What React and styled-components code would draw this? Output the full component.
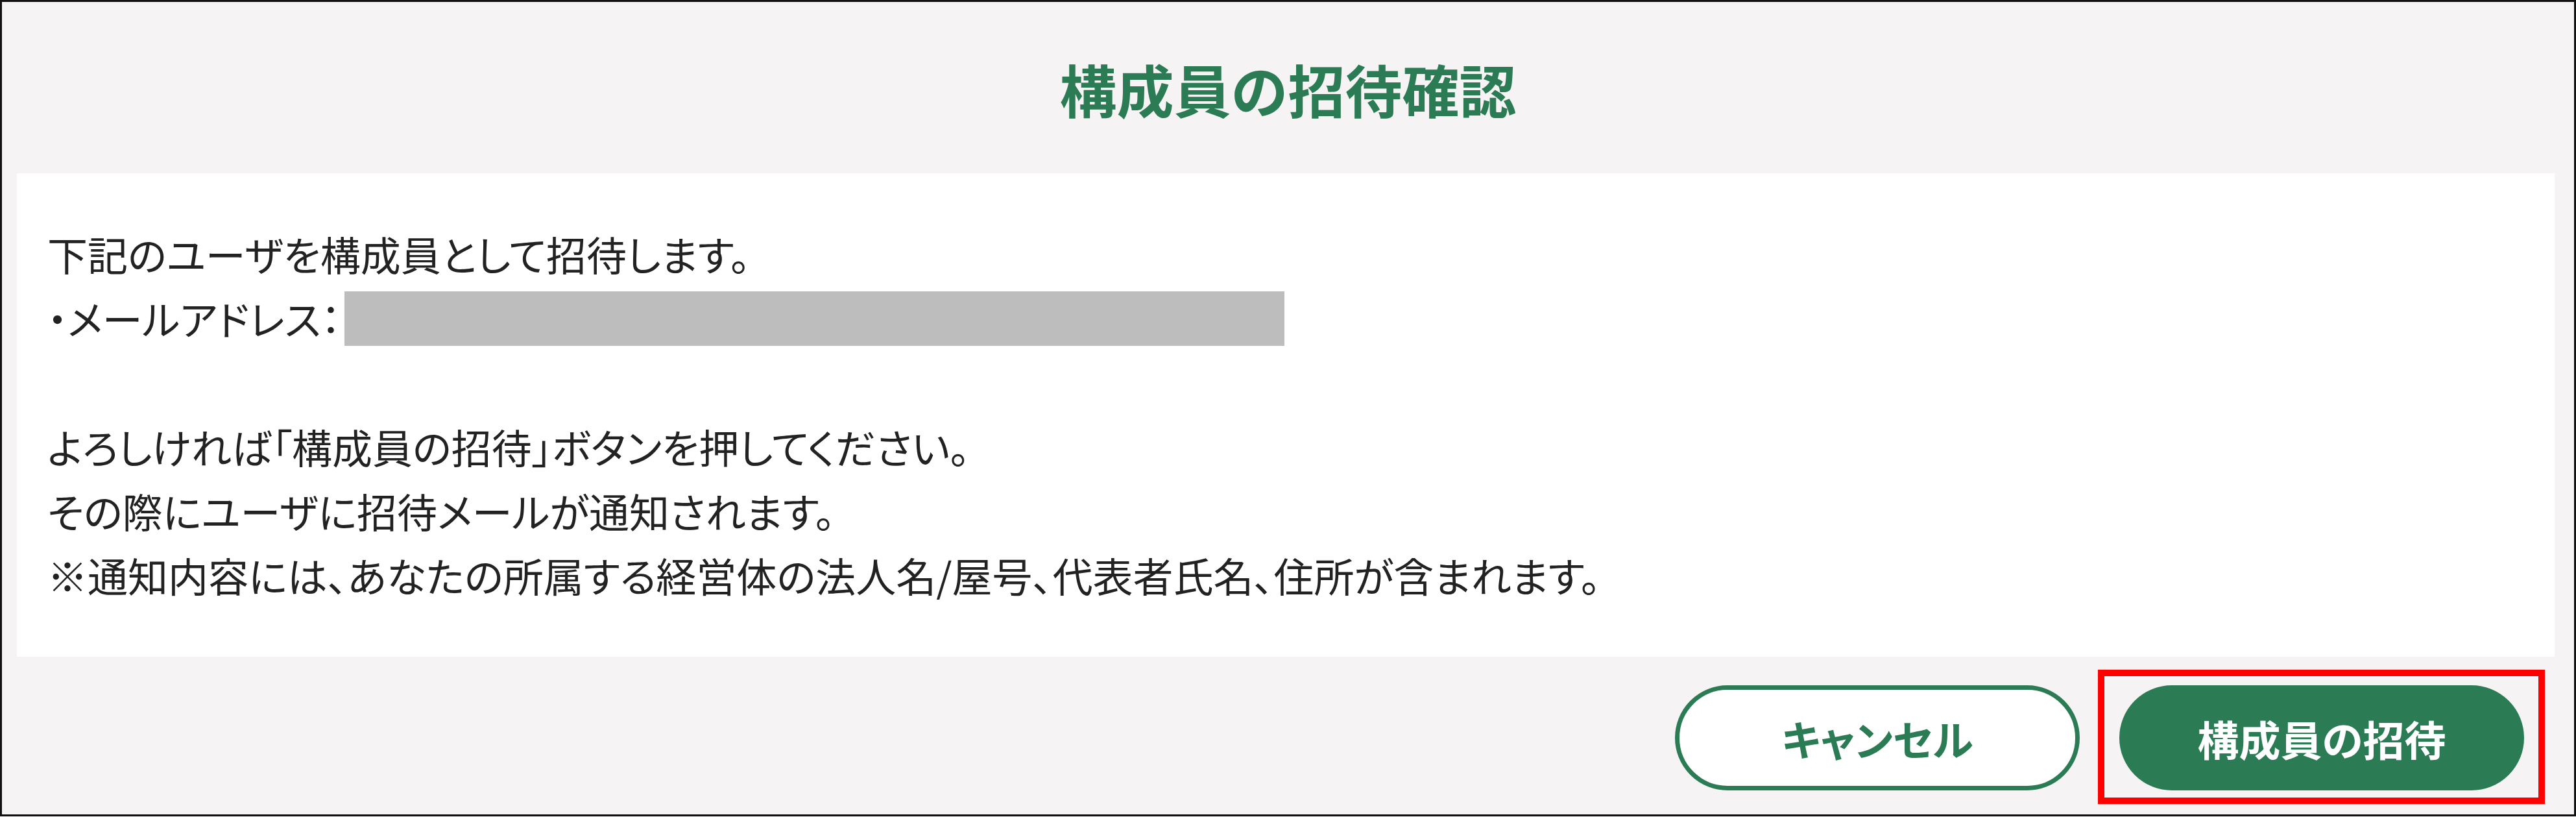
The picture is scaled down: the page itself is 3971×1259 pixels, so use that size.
import React from "react";
import styled, { createGlobalStyle } from "styled-components";

const GREEN = "#2b7c54";

const GlobalStyle = createGlobalStyle`
  html, body {
    margin: 0;
    padding: 0;
    background: #ffffff;
  }
  body {
    font-family: "Noto Sans CJK JP", "Noto Sans", sans-serif;
  }
`;

const Dialog = styled.section`
  box-sizing: border-box;
  width: 3971px;
  height: 1258px;
  border: 3px solid #111111;
  background: #f5f3f4;
  display: flex;
  flex-direction: column;
`;

const Header = styled.header`
  height: 264px;
  display: flex;
  align-items: center;
  justify-content: center;
`;

const Title = styled.h1`
  margin: 0;
  font-size: 88px;
  font-weight: 700;
  color: ${GREEN};
`;

const Body = styled.div`
  margin: 0 30px 0 23px;
  height: 745px;
  box-sizing: border-box;
  background: #ffffff;
  padding: 75px 40px 0 47px;
`;

const Line = styled.p`
  margin: 0;
  font-size: 62px;
  line-height: 99px;
  height: 99px;
  color: #222222;
  font-feature-settings: "palt";
  display: flex;
  align-items: center;
`;

const Masked = styled.span`
  display: inline-block;
  width: 1449px;
  height: 84px;
  background: #bdbdbd;
  margin-left: 6px;
`;

const Footer = styled.footer`
  flex: 1;
  display: flex;
  justify-content: flex-end;
  align-items: center;
  gap: 61px;
  padding-right: 77px;
  padding-top: 6px;
`;

const Button = styled.button`
  box-sizing: border-box;
  width: 624px;
  height: 162px;
  border-radius: 81px;
  border: 7px solid ${GREEN};
  background: ${(p) => (p.$primary ? GREEN : "#ffffff")};
  color: ${(p) => (p.$primary ? "#ffffff" : GREEN)};
  font-family: "Noto Sans CJK JP", sans-serif;
  font-size: 64px;
  font-weight: 700;
  font-feature-settings: "palt";
  cursor: pointer;
`;

const Highlight = styled.div`
  position: relative;

  &::after {
    content: "";
    position: absolute;
    left: -33px;
    right: -32px;
    top: -24px;
    bottom: -21px;
    border: 10px solid #ff0000;
    pointer-events: none;
  }
`;

export default function App() {
  return (
    <>
      <GlobalStyle />
      <Dialog>
        <Header>
          <Title>構成員の招待確認</Title>
        </Header>
        <Body>
          <Line>下記のユーザを構成員として招待します。</Line>
          <Line>
            ・メールアドレス：<Masked />
          </Line>
          <Line />
          <Line>よろしければ「構成員の招待」ボタンを押してください。</Line>
          <Line>その際にユーザに招待メールが通知されます。</Line>
          <Line>※通知内容には、あなたの所属する経営体の法人名/屋号、代表者氏名、住所が含まれます。</Line>
        </Body>
        <Footer>
          <Button>キャンセル</Button>
          <Highlight>
            <Button $primary>構成員の招待</Button>
          </Highlight>
        </Footer>
      </Dialog>
    </>
  );
}
